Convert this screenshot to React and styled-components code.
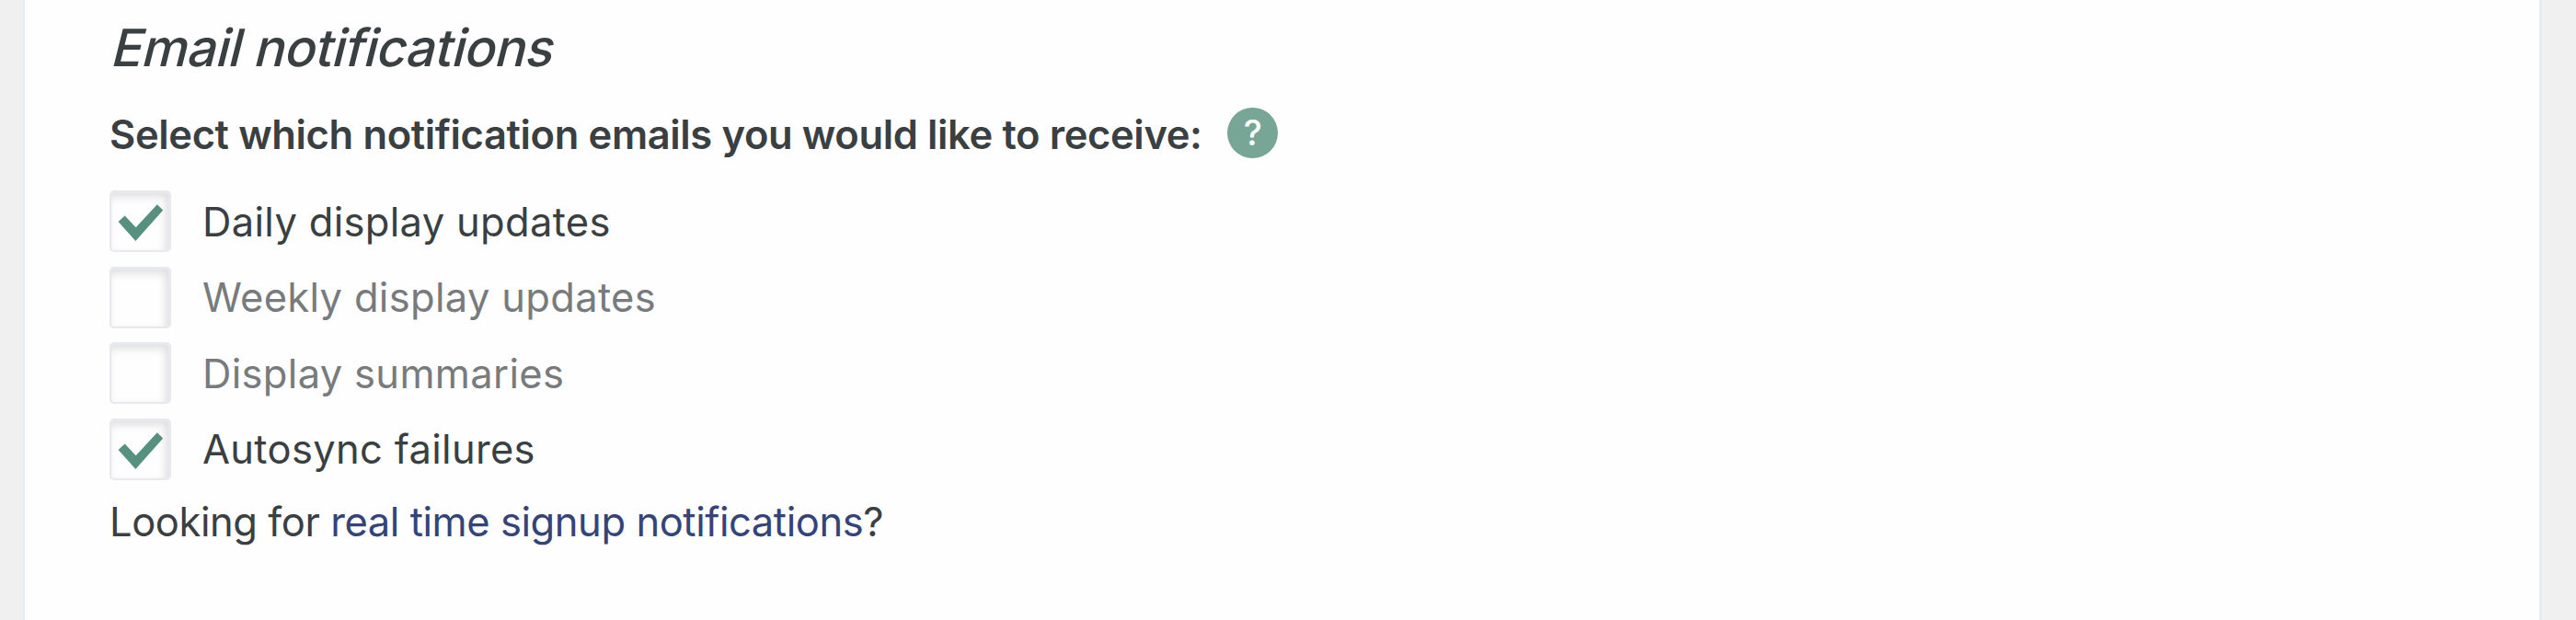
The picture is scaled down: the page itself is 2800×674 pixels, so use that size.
import React from "react";
import styled, { createGlobalStyle } from "styled-components";

const GlobalStyle = createGlobalStyle`
  * { box-sizing: border-box; }
  body {
    margin: 0;
    background: #f0f0f0;
    font-family: Inter, "Liberation Sans", sans-serif;
    color: #3a3f42;
  }
`;

const Page = styled.div`
  height: 674px;
  padding: 0 37px 0 25px;
  overflow: hidden;
`;

const Card = styled.section`
  height: 100%;
  padding: 18px 92px 0;
  background: #fefefe;
  border: solid #e8ebf2;
  border-width: 0 3px 0 2px;
`;

/* Slanted upright letters, not the cursive italic forms. */
const Title = styled.h2`
  width: max-content;
  margin: 0 0 31px;
  font-size: 56px;
  line-height: 68px;
  font-weight: 540;
  letter-spacing: -0.55px;
  transform: skewX(-14deg);
  transform-origin: 0 54px;
`;

const Prompt = styled.div`
  display: flex;
  align-items: flex-start;
  gap: 27.5px;
  margin-bottom: 32px;
  font-size: 43.5px;
  line-height: 58px;
  font-weight: 600;
  letter-spacing: -0.37px;
`;

const HelpBadge = styled.span`
  display: flex;
  align-items: center;
  justify-content: center;
  width: 55px;
  height: 55px;
  border-radius: 50%;
  background: #78a696;
  color: #fff;
  font-size: 38px;
  line-height: 55px;
  font-weight: 500;
`;

const Options = styled.ul`
  display: flex;
  flex-direction: column;
  gap: 15.5px;
  margin: 0 0 17px;
  padding: 0;
  list-style: none;
`;

const Option = styled.li`
  display: flex;
  align-items: center;
  gap: 34px;
  height: 67px;
  font-size: 43.5px;
  letter-spacing: 0.32px;
  color: ${(p) => (p.$checked ? "#3a3f42" : "#777b7d")};
`;

const Box = styled.span`
  display: flex;
  flex: none;
  width: 67px;
  height: 67px;
  border: solid #e8e9ee;
  border-width: 3px 3px 2px 2px;
  border-radius: 5px;
  background: #fefefe;
  box-shadow: inset -3px 4px 10px rgba(0, 0, 0, 0.13);
`;

const Tick = styled.svg`
  width: 62px;
  height: 62px;
  fill: #56917f;
`;

const Footnote = styled.p`
  margin: 0;
  font-size: 43.5px;
  line-height: 56px;
  letter-spacing: -0.43px;
`;

const Link = styled.a`
  color: #344478;
  text-decoration: none;
`;

const options = [
  { label: "Daily display updates", checked: true },
  { label: "Weekly display updates", checked: false },
  { label: "Display summaries", checked: false },
  { label: "Autosync failures", checked: true },
];

export default function App() {
  return (
    <>
      <GlobalStyle />
      <Page>
        <Card>
          <Title>Email notifications</Title>
          <Prompt>
            <span>Select which notification emails you would like to receive:</span>
            <HelpBadge>?</HelpBadge>
          </Prompt>
          <Options>
            {options.map((o) => (
              <Option key={o.label} $checked={o.checked}>
                <Box role="checkbox" aria-checked={o.checked}>
                  {o.checked && (
                    <Tick viewBox="0 0 62 62">
                      <path d="M7.6 31 14.7 24.6 26.7 37.2 49.8 12.2 56.2 18.5 26.4 52Z" />
                    </Tick>
                  )}
                </Box>
                <span>{o.label}</span>
              </Option>
            ))}
          </Options>
          <Footnote>
            Looking for <Link href="#">real time signup notifications</Link>?
          </Footnote>
        </Card>
      </Page>
    </>
  );
}
